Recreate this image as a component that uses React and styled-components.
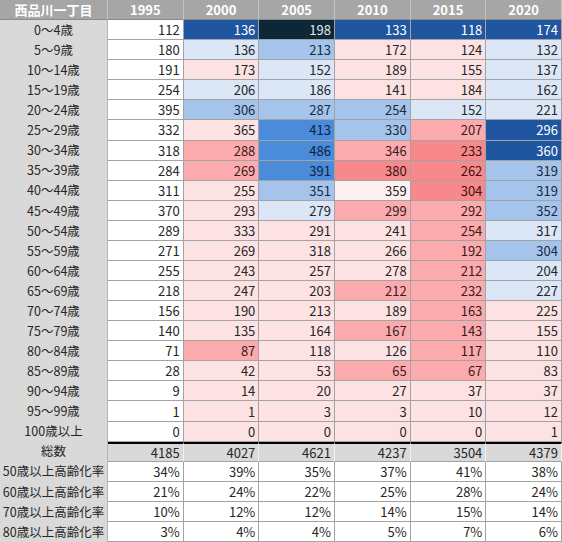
import React from "react";
import styled, { createGlobalStyle } from "styled-components";

// 西品川一丁目 population table with cohort heatmap colouring
const GlobalStyle = createGlobalStyle`
  html, body {
    margin: 0;
    padding: 0;
    background: #ffffff;
  }
  body {
    font-family: "Noto Sans CJK JP", "Noto Sans", sans-serif;
  }
`;

const tones = {
  w: { bg: "#ffffff", fg: "#262626" },
  p0: { bg: "#fdf0f1", fg: "#262626" },
  p1: { bg: "#fde2e4", fg: "#262626" },
  p2: { bg: "#fbabae", fg: "#3a1c1c" },
  p3: { bg: "#f7898b", fg: "#3a1414" },
  b1: { bg: "#dbe7f6", fg: "#262626" },
  b2: { bg: "#a5c4eb", fg: "#1b2a40" },
  b3: { bg: "#4a8bda", fg: "#0d2240" },
  b4: { bg: "#1f569f", fg: "#ffffff" },
  b5: { bg: "#0c2836", fg: "#e6e6e6" },
  g: { bg: "#d9d9d9", fg: "#262626" },
};

const years = ["1995", "2000", "2005", "2010", "2015", "2020"];

// label, values 1995..2020, tones 2000..2020 (1995 is always white)
const ageRows = [
  ["0〜4歳", [112, 136, 198, 133, 118, 174], "b4 b5 b4 b4 b4"],
  ["5〜9歳", [180, 136, 213, 172, 124, 132], "b1 b2 p1 p1 b1"],
  ["10〜14歳", [191, 173, 152, 189, 155, 137], "p1 b1 p1 p1 b1"],
  ["15〜19歳", [254, 206, 186, 141, 184, 162], "b1 b1 p1 p1 b1"],
  ["20〜24歳", [395, 306, 287, 254, 152, 221], "b2 b2 b2 b1 b1"],
  ["25〜29歳", [332, 365, 413, 330, 207, 296], "p1 b3 b2 p2 b4"],
  ["30〜34歳", [318, 288, 486, 346, 233, 360], "p2 b3 p2 p3 b4"],
  ["35〜39歳", [284, 269, 391, 380, 262, 319], "p2 b3 p3 p3 b2"],
  ["40〜44歳", [311, 255, 351, 359, 304, 319], "p1 b2 p0 p3 b2"],
  ["45〜49歳", [370, 293, 279, 299, 292, 352], "p1 b1 p2 p2 b2"],
  ["50〜54歳", [289, 333, 291, 241, 254, 317], "p1 p1 p1 p2 b1"],
  ["55〜59歳", [271, 269, 318, 266, 192, 304], "p1 p1 p1 p2 b2"],
  ["60〜64歳", [255, 243, 257, 278, 212, 204], "p1 p1 p1 p2 b1"],
  ["65〜69歳", [218, 247, 203, 212, 232, 227], "p1 p1 p2 p2 b1"],
  ["70〜74歳", [156, 190, 213, 189, 163, 225], "p1 p1 p1 p2 p1"],
  ["75〜79歳", [140, 135, 164, 167, 143, 155], "p1 p1 p2 p2 p1"],
  ["80〜84歳", [71, 87, 118, 126, 117, 110], "p2 p1 p1 p2 p1"],
  ["85〜89歳", [28, 42, 53, 65, 67, 83], "p1 p1 p2 p2 p1"],
  ["90〜94歳", [9, 14, 20, 27, 37, 37], "p1 p1 p1 p1 p1"],
  ["95〜99歳", [1, 1, 3, 3, 10, 12], "p1 p1 p1 p1 p1"],
  ["100歳以上", [0, 0, 0, 0, 0, 1], "p1 p1 p1 p1 p1"],
];

const totals = [4185, 4027, 4621, 4237, 3504, 4379];

const rates = [
  ["50歳以上高齢化率", ["34%", "39%", "35%", "37%", "41%", "38%"]],
  ["60歳以上高齢化率", ["21%", "24%", "22%", "25%", "28%", "24%"]],
  ["70歳以上高齢化率", ["10%", "12%", "12%", "14%", "15%", "14%"]],
  ["80歳以上高齢化率", ["3%", "4%", "4%", "5%", "7%", "6%"]],
];

const Table = styled.div`
  display: grid;
  grid-template-columns: 108px repeat(6, 1fr);
  grid-template-rows: repeat(27, 1fr);
  width: 562px;
  height: 542px;
  font-size: 13px;
  line-height: 1;
`;

const HeadCell = styled.div`
  display: flex;
  align-items: center;
  justify-content: center;
  background: #a6a6a6;
  color: #ffffff;
  font-weight: 700;
  border-right: 1px solid #c4c4c4;
  border-bottom: 1px solid #8c8c8c;
  box-sizing: border-box;
`;

const LabelCell = styled.div`
  display: flex;
  align-items: center;
  justify-content: center;
  background: #d9d9d9;
  color: #262626;
  font-size: 12.5px;
  white-space: nowrap;
  border-right: 1px solid #b4b4b4;
  box-sizing: border-box;
`;

const NumCell = styled.div`
  display: flex;
  align-items: center;
  justify-content: flex-end;
  padding-right: 3px;
  background: ${(p) => tones[p.$tone].bg};
  color: ${(p) => tones[p.$tone].fg};
  border-right: 1px solid ${(p) => (p.$tone === "g" ? "#f0f0f0" : "#a3a3a3")};
  border-bottom: 1px solid #a3a3a3;
  border-top: ${(p) => (p.$rule ? "2px solid #000000" : "none")};
  box-sizing: border-box;
`;

export default function App() {
  return (
    <>
      <GlobalStyle />
      <Table>
        <HeadCell>西品川一丁目</HeadCell>
        {years.map((y) => (
          <HeadCell key={y}>{y}</HeadCell>
        ))}

        {ageRows.map(([label, values, toneStr]) => {
          const rowTones = ["w", ...toneStr.split(" ")];
          return (
            <React.Fragment key={label}>
              <LabelCell>{label}</LabelCell>
              {values.map((v, i) => (
                <NumCell key={i} $tone={rowTones[i]}>
                  {v}
                </NumCell>
              ))}
            </React.Fragment>
          );
        })}

        <LabelCell>総数</LabelCell>
        {totals.map((v, i) => (
          <NumCell key={i} $tone="g" $rule>
            {v}
          </NumCell>
        ))}

        {rates.map(([label, values]) => (
          <React.Fragment key={label}>
            <LabelCell>{label}</LabelCell>
            {values.map((v, i) => (
              <NumCell key={i} $tone="w">
                {v}
              </NumCell>
            ))}
          </React.Fragment>
        ))}
      </Table>
    </>
  );
}
